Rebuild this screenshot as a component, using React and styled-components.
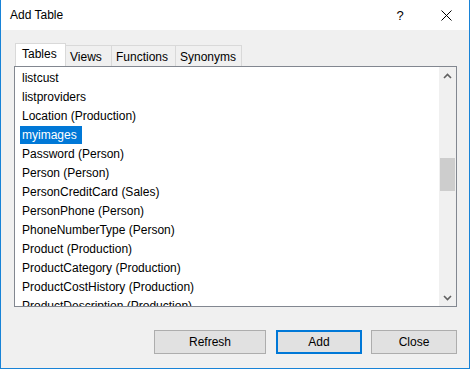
import React from "react";
import styled, { createGlobalStyle } from "styled-components";

const Global = createGlobalStyle`
  html, body { margin: 0; padding: 0; background: #ffffff; }
  body { font-family: "Liberation Sans", Arial, sans-serif; font-size: 12px; color: #000; }
  * { box-sizing: border-box; }
`;

const Window = styled.div`
  width: 470px;
  height: 369px;
  display: flex;
  flex-direction: column;
  border-left: 1px solid #1883d7;
  border-right: 1px solid #1883d7;
  border-bottom: 1px solid #1883d7;
  background: #f0f0f0;
`;

const TitleBar = styled.div`
  height: 30px;
  flex: none;
  background: #ffffff;
  display: flex;
  align-items: center;
  padding-left: 9px;
`;

const Title = styled.div`
  flex: 1;
  font-size: 12px;
  line-height: 30px;
`;

const TitleButton = styled.div`
  width: 46px;
  height: 30px;
  display: flex;
  align-items: center;
  justify-content: center;
  font-size: 13px;
`;

const Body = styled.div`
  flex: 1;
  display: flex;
  flex-direction: column;
  padding: 13px 12px 0 13px;
`;

const TabStrip = styled.div`
  display: flex;
  align-items: flex-end;
  height: 23px;
  padding-left: 1px;
`;

const Tab = styled.div`
  height: ${(p) => (p.$active ? 23 : 21)}px;
  width: ${(p) => p.$w}px;
  background: ${(p) => (p.$active ? "#ffffff" : "#f0f0f0")};
  border: 1px solid #d9d9d9;
  border-bottom: none;
  margin-left: ${(p) => (p.$first ? 0 : -1)}px;
  padding-left: ${(p) => (p.$active ? 6 : 4)}px;
  line-height: ${(p) => (p.$active ? 20 : 22)}px;
  font-size: 12px;
  position: relative;
  z-index: ${(p) => (p.$active ? 1 : 0)};
`;

const ListBox = styled.div`
  height: 241px;
  border: 1px solid #828790;
  background: #ffffff;
  display: flex;
`;

const Items = styled.div`
  flex: 1;
  overflow: hidden;
  padding-top: 2px;
`;

const Row = styled.div`
  height: 19px;
  padding-left: 5px;
  white-space: nowrap;
`;

const Label = styled.span`
  display: inline-block;
  height: 18px;
  line-height: 19px;
  padding: 0 5px 0 2px;
  background: ${(p) => (p.$selected ? "#0078d7" : "transparent")};
  color: ${(p) => (p.$selected ? "#ffffff" : "#000000")};
`;

const ScrollBar = styled.div`
  width: 17px;
  flex: none;
  background: #f0f0f0;
  display: flex;
  flex-direction: column;
  align-items: center;
`;

const Arrow = styled.div`
  height: 17px;
  width: 17px;
  display: flex;
  align-items: center;
  justify-content: center;
`;

const Track = styled.div`
  flex: 1;
  width: 100%;
  padding-top: ${(p) => p.$offset}px;
  display: flex;
  justify-content: center;
`;

const Thumb = styled.div`
  width: 15px;
  height: 33px;
  background: #cdcdcd;
  margin-right: 1px;
`;

const ButtonRow = styled.div`
  display: flex;
  justify-content: flex-end;
  gap: 9px;
  margin-top: 23px;
`;

const Button = styled.div`
  width: ${(p) => p.$w}px;
  height: 24px;
  margin-right: ${(p) => p.$after || 0}px;
  background: #e1e1e1;
  border: ${(p) => (p.$default ? "2px solid #0078d7" : "1px solid #adadad")};
  display: flex;
  align-items: center;
  justify-content: center;
  font-size: 12px;
`;

const Chevron = ({ up }) => (
  <svg width="9" height="6" viewBox="0 0 9 6">
    <path
      d={up ? "M1 5 L4.5 1.5 L8 5" : "M1 1 L4.5 4.5 L8 1"}
      fill="none"
      stroke="#606060"
      strokeWidth="1.6"
    />
  </svg>
);

const items = [
  "listcust",
  "listproviders",
  "Location (Production)",
  "myimages",
  "Password (Person)",
  "Person (Person)",
  "PersonCreditCard (Sales)",
  "PersonPhone (Person)",
  "PhoneNumberType (Person)",
  "Product (Production)",
  "ProductCategory (Production)",
  "ProductCostHistory (Production)",
  "ProductDescription (Production)",
];

const tabs = [
  { name: "Tables", w: 51 },
  { name: "Views", w: 47 },
  { name: "Functions", w: 65 },
  { name: "Synonyms", w: 67 },
];

export default function App() {
  return (
    <>
      <Global />
      <Window>
        <TitleBar>
          <Title>Add Table</Title>
          <TitleButton>?</TitleButton>
          <TitleButton>
            <svg width="12" height="11" viewBox="0 0 12 11">
              <path d="M1.5 0.5 L11.5 10.5 M11.5 0.5 L1.5 10.5" stroke="#000" strokeWidth="1" />
            </svg>
          </TitleButton>
        </TitleBar>
        <Body>
          <TabStrip>
            {tabs.map((t, i) => (
              <Tab key={t.name} $w={t.w} $active={i === 0} $first={i === 0}>
                {t.name}
              </Tab>
            ))}
          </TabStrip>
          <ListBox>
            <Items>
              {items.map((it) => (
                <Row key={it}>
                  <Label $selected={it === "myimages"}>{it}</Label>
                </Row>
              ))}
            </Items>
            <ScrollBar>
              <Arrow>
                <Chevron up />
              </Arrow>
              <Track $offset={74}>
                <Thumb />
              </Track>
              <Arrow>
                <Chevron />
              </Arrow>
            </ScrollBar>
          </ListBox>
          <ButtonRow>
            <Button $w={112} $after={1}>Refresh</Button>
            <Button $w={86} $default>
              Add
            </Button>
            <Button $w={86}>Close</Button>
          </ButtonRow>
        </Body>
      </Window>
    </>
  );
}
